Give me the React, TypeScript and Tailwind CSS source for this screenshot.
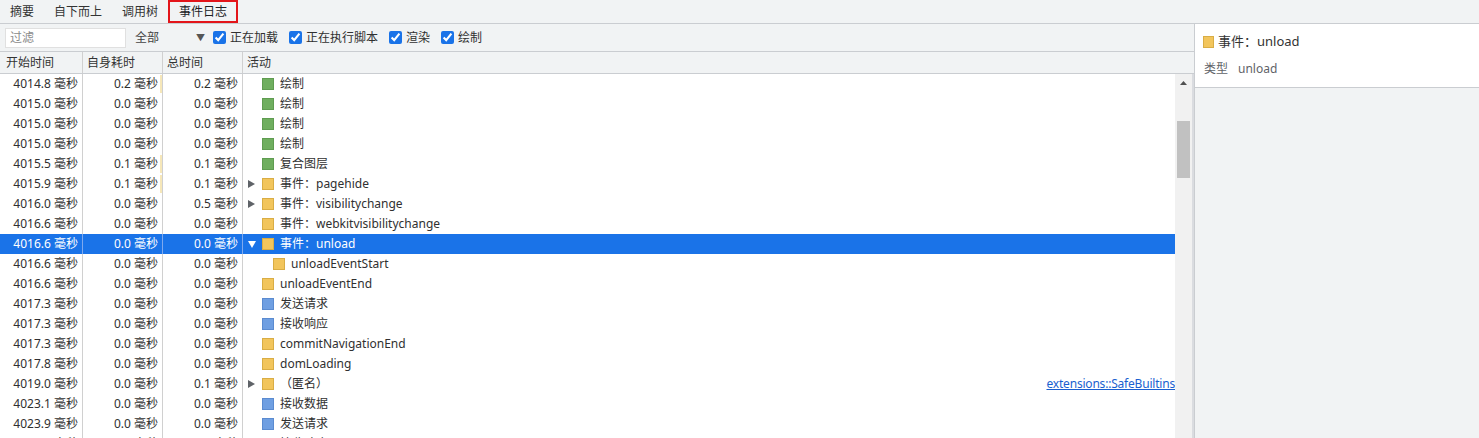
import React from 'react';

type Row = {
  start: string;
  self: string;
  total: string;
  color: 'green' | 'yellow' | 'blue';
  label: string;
  arrow?: 'right' | 'down';
  depth?: number;
  selfBar?: boolean;
  selected?: boolean;
  link?: string;
};

const rows: Row[] = [
  { start: '4014.8', self: '0.2', total: '0.2', color: 'green', label: '绘制', selfBar: true },
  { start: '4015.0', self: '0.0', total: '0.0', color: 'green', label: '绘制' },
  { start: '4015.0', self: '0.0', total: '0.0', color: 'green', label: '绘制' },
  { start: '4015.0', self: '0.0', total: '0.0', color: 'green', label: '绘制' },
  { start: '4015.5', self: '0.1', total: '0.1', color: 'green', label: '复合图层', selfBar: true },
  { start: '4015.9', self: '0.1', total: '0.1', color: 'yellow', label: '事件：pagehide', arrow: 'right', selfBar: true },
  { start: '4016.0', self: '0.0', total: '0.5', color: 'yellow', label: '事件：visibilitychange', arrow: 'right' },
  { start: '4016.6', self: '0.0', total: '0.0', color: 'yellow', label: '事件：webkitvisibilitychange' },
  { start: '4016.6', self: '0.0', total: '0.0', color: 'yellow', label: '事件：unload', arrow: 'down', selected: true },
  { start: '4016.6', self: '0.0', total: '0.0', color: 'yellow', label: 'unloadEventStart', depth: 1 },
  { start: '4016.6', self: '0.0', total: '0.0', color: 'yellow', label: 'unloadEventEnd' },
  { start: '4017.3', self: '0.0', total: '0.0', color: 'blue', label: '发送请求' },
  { start: '4017.3', self: '0.0', total: '0.0', color: 'blue', label: '接收响应' },
  { start: '4017.3', self: '0.0', total: '0.0', color: 'yellow', label: 'commitNavigationEnd' },
  { start: '4017.8', self: '0.0', total: '0.0', color: 'yellow', label: 'domLoading' },
  { start: '4019.0', self: '0.0', total: '0.1', color: 'yellow', label: '（匿名）', arrow: 'right', link: 'extensions::SafeBuiltins' },
  { start: '4023.1', self: '0.0', total: '0.0', color: 'blue', label: '接收数据' },
  { start: '4023.9', self: '0.0', total: '0.0', color: 'blue', label: '发送请求' },
  { start: '4024.0', self: '0.0', total: '0.0', color: 'blue', label: '接收响应' },
];

const swatch = {
  green: 'bg-[#6fae5f] border-[#5f9c50]',
  yellow: 'bg-[#f2c55c] border-[#d9ad45]',
  blue: 'bg-[#6f9fe2] border-[#5b8bd0]',
};

const Arrow = ({ dir, selected }: { dir?: 'right' | 'down'; selected?: boolean }) => (
  <span className="w-[10px] h-[10px] flex items-center justify-start">
    {dir === 'right' && (
      <svg width="7" height="8" viewBox="0 0 7 8">
        <path d="M0 0 L7 4 L0 8 Z" fill="#5f6368" />
      </svg>
    )}
    {dir === 'down' && (
      <svg width="8" height="7" viewBox="0 0 8 7">
        <path d="M0 0 L8 0 L4 7 Z" fill={selected ? '#ffffff' : '#5f6368'} />
      </svg>
    )}
  </span>
);

const Check = ({ label }: { label: string }) => (
  <label className="flex items-center mr-[7px]">
    <input type="checkbox" defaultChecked className="w-[13px] h-[13px] m-0 ml-[4px] mr-[4px] accent-[#1a73e8]" />
    <span>{label}</span>
  </label>
);

export default function App() {
  const tabs = ['摘要', '自下而上', '调用树', '事件日志'];
  return (
    <div
      className="w-[1479px] h-[438px] overflow-hidden flex flex-col bg-[#f1f3f4] text-[12px] text-[#303030]"
      style={{ fontFamily: '"Segoe UI", "Noto Sans", "Noto Sans CJK SC", sans-serif' }}
    >
      {/* tab bar */}
      <div className="h-[24px] flex items-stretch border-b border-[#cacdd1] shrink-0">
        {tabs.map((t, i) => (
          <div
            key={t}
            className={`flex items-center ${i === 3 ? 'border-2 border-[#e3151a] px-[9px] text-[#202124]' : 'px-[10px] text-[#333]'}`}
          >
            {t}
          </div>
        ))}
      </div>

      <div className="flex flex-1 min-h-0">
        {/* left panel */}
        <div className="flex-1 flex flex-col min-w-0">
          {/* toolbar */}
          <div className="h-[28px] flex items-center border-b border-[#cacdd1] shrink-0">
            <div className="ml-[5px] w-[121px] h-[20px] bg-white border border-[#e0e0e0] flex items-center pl-[4px] text-[#8a8a8a]">
              过滤
            </div>
            <div className="ml-[9px] w-[70px] flex items-center justify-between text-[#444]">
              <span>全部</span>
              <span className="text-[9px] text-[#555]">▼</span>
            </div>
            <div className="ml-[4px] flex items-center">
              <Check label="正在加载" />
              <Check label="正在执行脚本" />
              <Check label="渲染" />
              <Check label="绘制" />
            </div>
          </div>

          {/* header */}
          <div className="h-[22px] flex border-b border-[#cacdd1] shrink-0 text-[#333]">
            <div className="w-[83px] border-r border-[#d0d0d0] pl-[6px] flex items-center">开始时间</div>
            <div className="w-[80px] border-r border-[#d0d0d0] pl-[4px] flex items-center">自身耗时</div>
            <div className="w-[80px] border-r border-[#d0d0d0] pl-[4px] flex items-center">总时间</div>
            <div className="flex-1 pl-[4px] flex items-center">活动</div>
          </div>

          {/* body */}
          <div className="flex-1 flex min-h-0 bg-white">
            <div className="flex-1 min-w-0 overflow-hidden">
              {rows.map((r, i) => (
                <div
                  key={i}
                  className={`h-[20px] flex leading-[20px] whitespace-nowrap ${r.selected ? 'bg-[#1a73e8] text-white' : ''}`}
                >
                  <div className={`w-[83px] border-r pr-[4px] text-right ${r.selected ? 'border-[#7fa9ee]' : 'border-[#d0d0d0]'}`}>
                    {r.start} 毫秒
                  </div>
                  <div className={`relative w-[80px] border-r pr-[4px] text-right ${r.selected ? 'border-[#7fa9ee]' : 'border-[#d0d0d0]'}`}>
                    {r.self} 毫秒
                    {r.selfBar && <span className="absolute right-0 top-[1px] w-[2px] h-[18px] bg-[#f6e7b9]" />}
                  </div>
                  <div className={`w-[80px] border-r pr-[4px] text-right ${r.selected ? 'border-[#7fa9ee]' : 'border-[#d0d0d0]'}`}>
                    {r.total} 毫秒
                  </div>
                  <div className="flex-1 min-w-0 flex items-center pl-[5px]">
                    <div className={`flex items-center ${r.depth ? 'pl-[11px]' : ''}`}>
                      <Arrow dir={r.arrow} selected={r.selected} />
                      <span className={`ml-[4px] w-[12px] h-[12px] border ${swatch[r.color]}`} />
                      <span className="ml-[6px]">{r.label}</span>
                    </div>
                    {r.link && (
                      <span className="ml-auto text-[#1a5fd0] underline tracking-[-0.2px]">{r.link}</span>
                    )}
                  </div>
                </div>
              ))}
            </div>
            {/* scrollbar */}
            <div className="w-[17px] bg-[#f1f1f1] flex flex-col items-center shrink-0">
              <svg width="7" height="4" viewBox="0 0 7 4" className="mt-[7px]">
                <path d="M0 4 L3.5 0 L7 4 Z" fill="#505050" />
              </svg>
              <div className="mt-[36px] w-[13px] h-[57px] bg-[#c1c1c1]" />
            </div>
            <div className="w-[2px] bg-[#dadce0] shrink-0" />
          </div>
        </div>

        {/* right panel */}
        <div className="w-[285px] shrink-0 border-l border-[#cacdd1] flex flex-col">
          <div className="h-[64px] bg-white border-b border-[#cacdd1] pl-[8px] pt-[9px] text-[#5f6368]">
            <div className="flex items-center h-[18px] text-[13px] text-[#333]">
              <span className="w-[11px] h-[12px] bg-[#f2c55c] border border-[#d9ad45]" />
              <span className="ml-[4px]">事件：unload</span>
            </div>
            <div className="flex items-center h-[18px] mt-[9px] pl-[1px]">
              <span className="w-[34px]">类型</span>
              <span>unload</span>
            </div>
          </div>
          <div className="flex-1 bg-[#f1f3f4]" />
        </div>
      </div>
    </div>
  );
}
